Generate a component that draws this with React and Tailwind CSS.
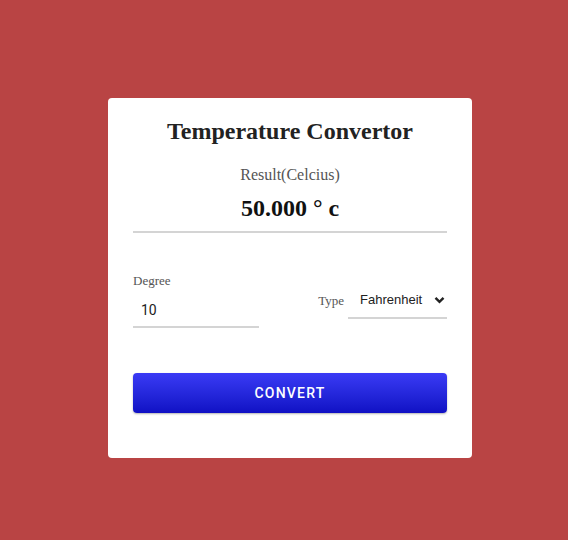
import React from "react";

export default function App() {
  return (
    <div className="min-h-[540px] w-full bg-[#b94444] pt-[98px] pl-[108px]">
      <div className="w-[364px] h-[360px] bg-white rounded-[4px] px-[25px] pt-[19px] flex flex-col">
        <h1 className="text-center text-[24px] leading-[28px] font-bold text-[#222] font-['Liberation_Serif',serif]">
          Temperature Convertor
        </h1>
        <div className="mt-[20px] text-center text-[16px] leading-[19px] text-[#555] font-['Liberation_Serif',serif]">
          Result(Celcius)
        </div>
        <div className="mt-[10px] text-center text-[24px] leading-[28px] font-bold text-[#111] font-['Liberation_Serif',serif]">
          50.000 ° c
        </div>
        <div className="mt-[9px] h-[2px] bg-[#d4d4d4]" />
        <div className="mt-[40px] flex items-start justify-between">
          <div className="flex flex-col">
            <label className="text-[13px] leading-[15px] text-[#555] font-['Liberation_Serif',serif]">
              Degree
            </label>
            <div className="mt-[14px] w-[126px] border-b-2 border-[#d4d4d4] pb-[8px] pl-[8px] text-[14px] leading-[16px] text-[#222] font-['Roboto',sans-serif]">
              10
            </div>
          </div>
          <div className="mt-[19px] flex items-start">
            <span className="mt-[1px] text-[13px] leading-[15px] text-[#555] font-['Liberation_Serif',serif]">
              Type
            </span>
            <div className="ml-[4px] w-[99px] border-b-2 border-[#d4d4d4] pb-[9px] pl-[12px] pr-[2px] flex items-center justify-between">
              <span className="text-[13px] leading-[16px] text-[#222] font-['Liberation_Sans',sans-serif]">
                Fahrenheit
              </span>
              <svg width="11" height="8" viewBox="0 0 11 8">
                <path d="M1.5 1.8 L5.5 5.8 L9.5 1.8" fill="none" stroke="#222" strokeWidth="2.4" />
              </svg>
            </div>
          </div>
        </div>
        <button className="mt-[45px] h-[40px] w-full rounded-[4px] bg-gradient-to-b from-[#3a3af5] to-[#1010c4] text-white text-[14px] font-medium tracking-[1.2px] font-['Roboto',sans-serif] shadow-[0_1px_2px_rgba(0,0,0,0.3)]">
          CONVERT
        </button>
      </div>
    </div>
  );
}
